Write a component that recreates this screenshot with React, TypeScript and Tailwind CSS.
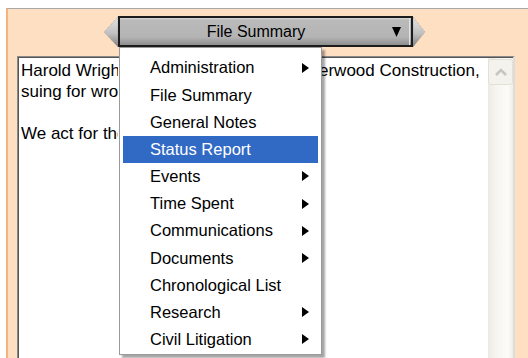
const menuItems: { label: string; sub?: boolean; active?: boolean }[] = [
  { label: "Administration", sub: true },
  { label: "File Summary" },
  { label: "General Notes" },
  { label: "Status Report", active: true },
  { label: "Events", sub: true },
  { label: "Time Spent", sub: true },
  { label: "Communications", sub: true },
  { label: "Documents", sub: true },
  { label: "Chronological List" },
  { label: "Research", sub: true },
  { label: "Civil Litigation", sub: true },
];

function SideArrow({ dir }: { dir: "left" | "right" }) {
  const w = dir === "left" ? 14 : 12;
  const pts = dir === "left" ? `14,0 0,15 14,30` : `0,0 12,15 0,30`;
  return (
    <svg width={w} height={30} viewBox={`0 0 ${w} 30`} className="block mt-[1px]">
      <defs>
        <linearGradient id={`g-${dir}`} x1="0" y1="0" x2="0" y2="1">
          <stop offset="0" stopColor="#e4e4e4" />
          <stop offset="0.55" stopColor="#c0c0c0" />
          <stop offset="1" stopColor="#7e7e7e" />
        </linearGradient>
      </defs>
      <polygon points={pts} fill={`url(#g-${dir})`} stroke="#9e9e9e" strokeWidth="0.8" strokeDasharray="1 1" />
    </svg>
  );
}

export default function App() {
  return (
    <div className="relative w-[528px] h-[358px] overflow-hidden bg-white pt-[8px] pl-[6px] font-['Liberation_Sans',Arial,sans-serif] text-black">
      <div className="h-full flex flex-col border-t border-t-[#a9a9a9] border-l-2 border-l-[#f6b37b] bg-[#ffdfc2]">
        {/* top selector */}
        <div className="flex items-start h-[38px] pt-[7px] pl-[96px]">
          <SideArrow dir="left" />
          <div className="flex items-center w-[295px] h-[31px] border-2 border-[#1c1c1c] bg-[linear-gradient(to_bottom,#d8d8d8_0px,#bababa_2px,#b4b4b4_19px,#8e8e8e_27px)]">
            <div className="flex-1 text-center text-[16px] leading-none">File Summary</div>
            <div className="flex items-center h-full pr-[1px]">
              <svg width="9" height="10" viewBox="0 0 9 10" className="block mr-[8px]">
                <polygon points="0,0 9,0 4.5,10" fill="#000" />
              </svg>
              <div className="w-px h-full bg-[#e2e2e2]" />
            </div>
          </div>
          <SideArrow dir="right" />
        </div>

        {/* text box */}
        <div className="ml-[9px] mt-[9px] w-[498px] flex-1 flex border-t border-l border-[#8a8a8a] border-r-2 border-r-[#dcdcdc]">
          <div className="flex-1 flex border-t border-l border-[#555]">
            <div className="flex-1 bg-white pl-[2px] pt-[2px] text-[17px] leading-[21px] whitespace-nowrap overflow-hidden">
              <div className="flex">
                <span className="w-[97px] overflow-hidden">Harold Wright is suing Und</span>
                <span className="ml-[201px]">erwood Construction,</span>
              </div>
              <div className="w-[97px] overflow-hidden">suing for wrongful dismissal.</div>
              <div>&nbsp;</div>
              <div className="w-[97px] overflow-hidden">We act for the defendant.</div>
            </div>
            <div className="w-[25px] flex flex-col bg-[linear-gradient(to_right,#ecebe3,#f7f6f1_40%,#fbfbf8_80%,#efeee6)]">
              <div className="mt-[1px] h-[26px] rounded-[3px] border border-[#e3e1d6] bg-[#f3f2ec] flex items-center justify-center">
                <svg width="12" height="8" viewBox="0 0 12 8">
                  <polyline points="1,7 6,2 11,7" fill="none" stroke="#c7c6be" strokeWidth="2.5" />
                </svg>
              </div>
            </div>
          </div>
        </div>
      </div>

      {/* open dropdown menu */}
      <div className="absolute left-[119px] top-[47px] w-[203px] h-[308px] bg-white border border-[#9a9a9a] shadow-[3px_3px_2px_rgba(0,0,0,0.35)] pt-[6px] px-[3px] text-[16.5px]">
        {menuItems.map((m) => (
          <div
            key={m.label}
            className={`flex items-center h-[27.2px] pl-[27px] pr-[9px] ${m.active ? "bg-[#316ac5] text-white" : ""}`}
          >
            <span className="flex-1 leading-none">{m.label}</span>
            {m.sub && (
              <svg width="7" height="10" viewBox="0 0 7 10" className="block">
                <polygon points="0,0 7,5 0,10" fill={m.active ? "#fff" : "#000"} />
              </svg>
            )}
          </div>
        ))}
      </div>
    </div>
  );
}
